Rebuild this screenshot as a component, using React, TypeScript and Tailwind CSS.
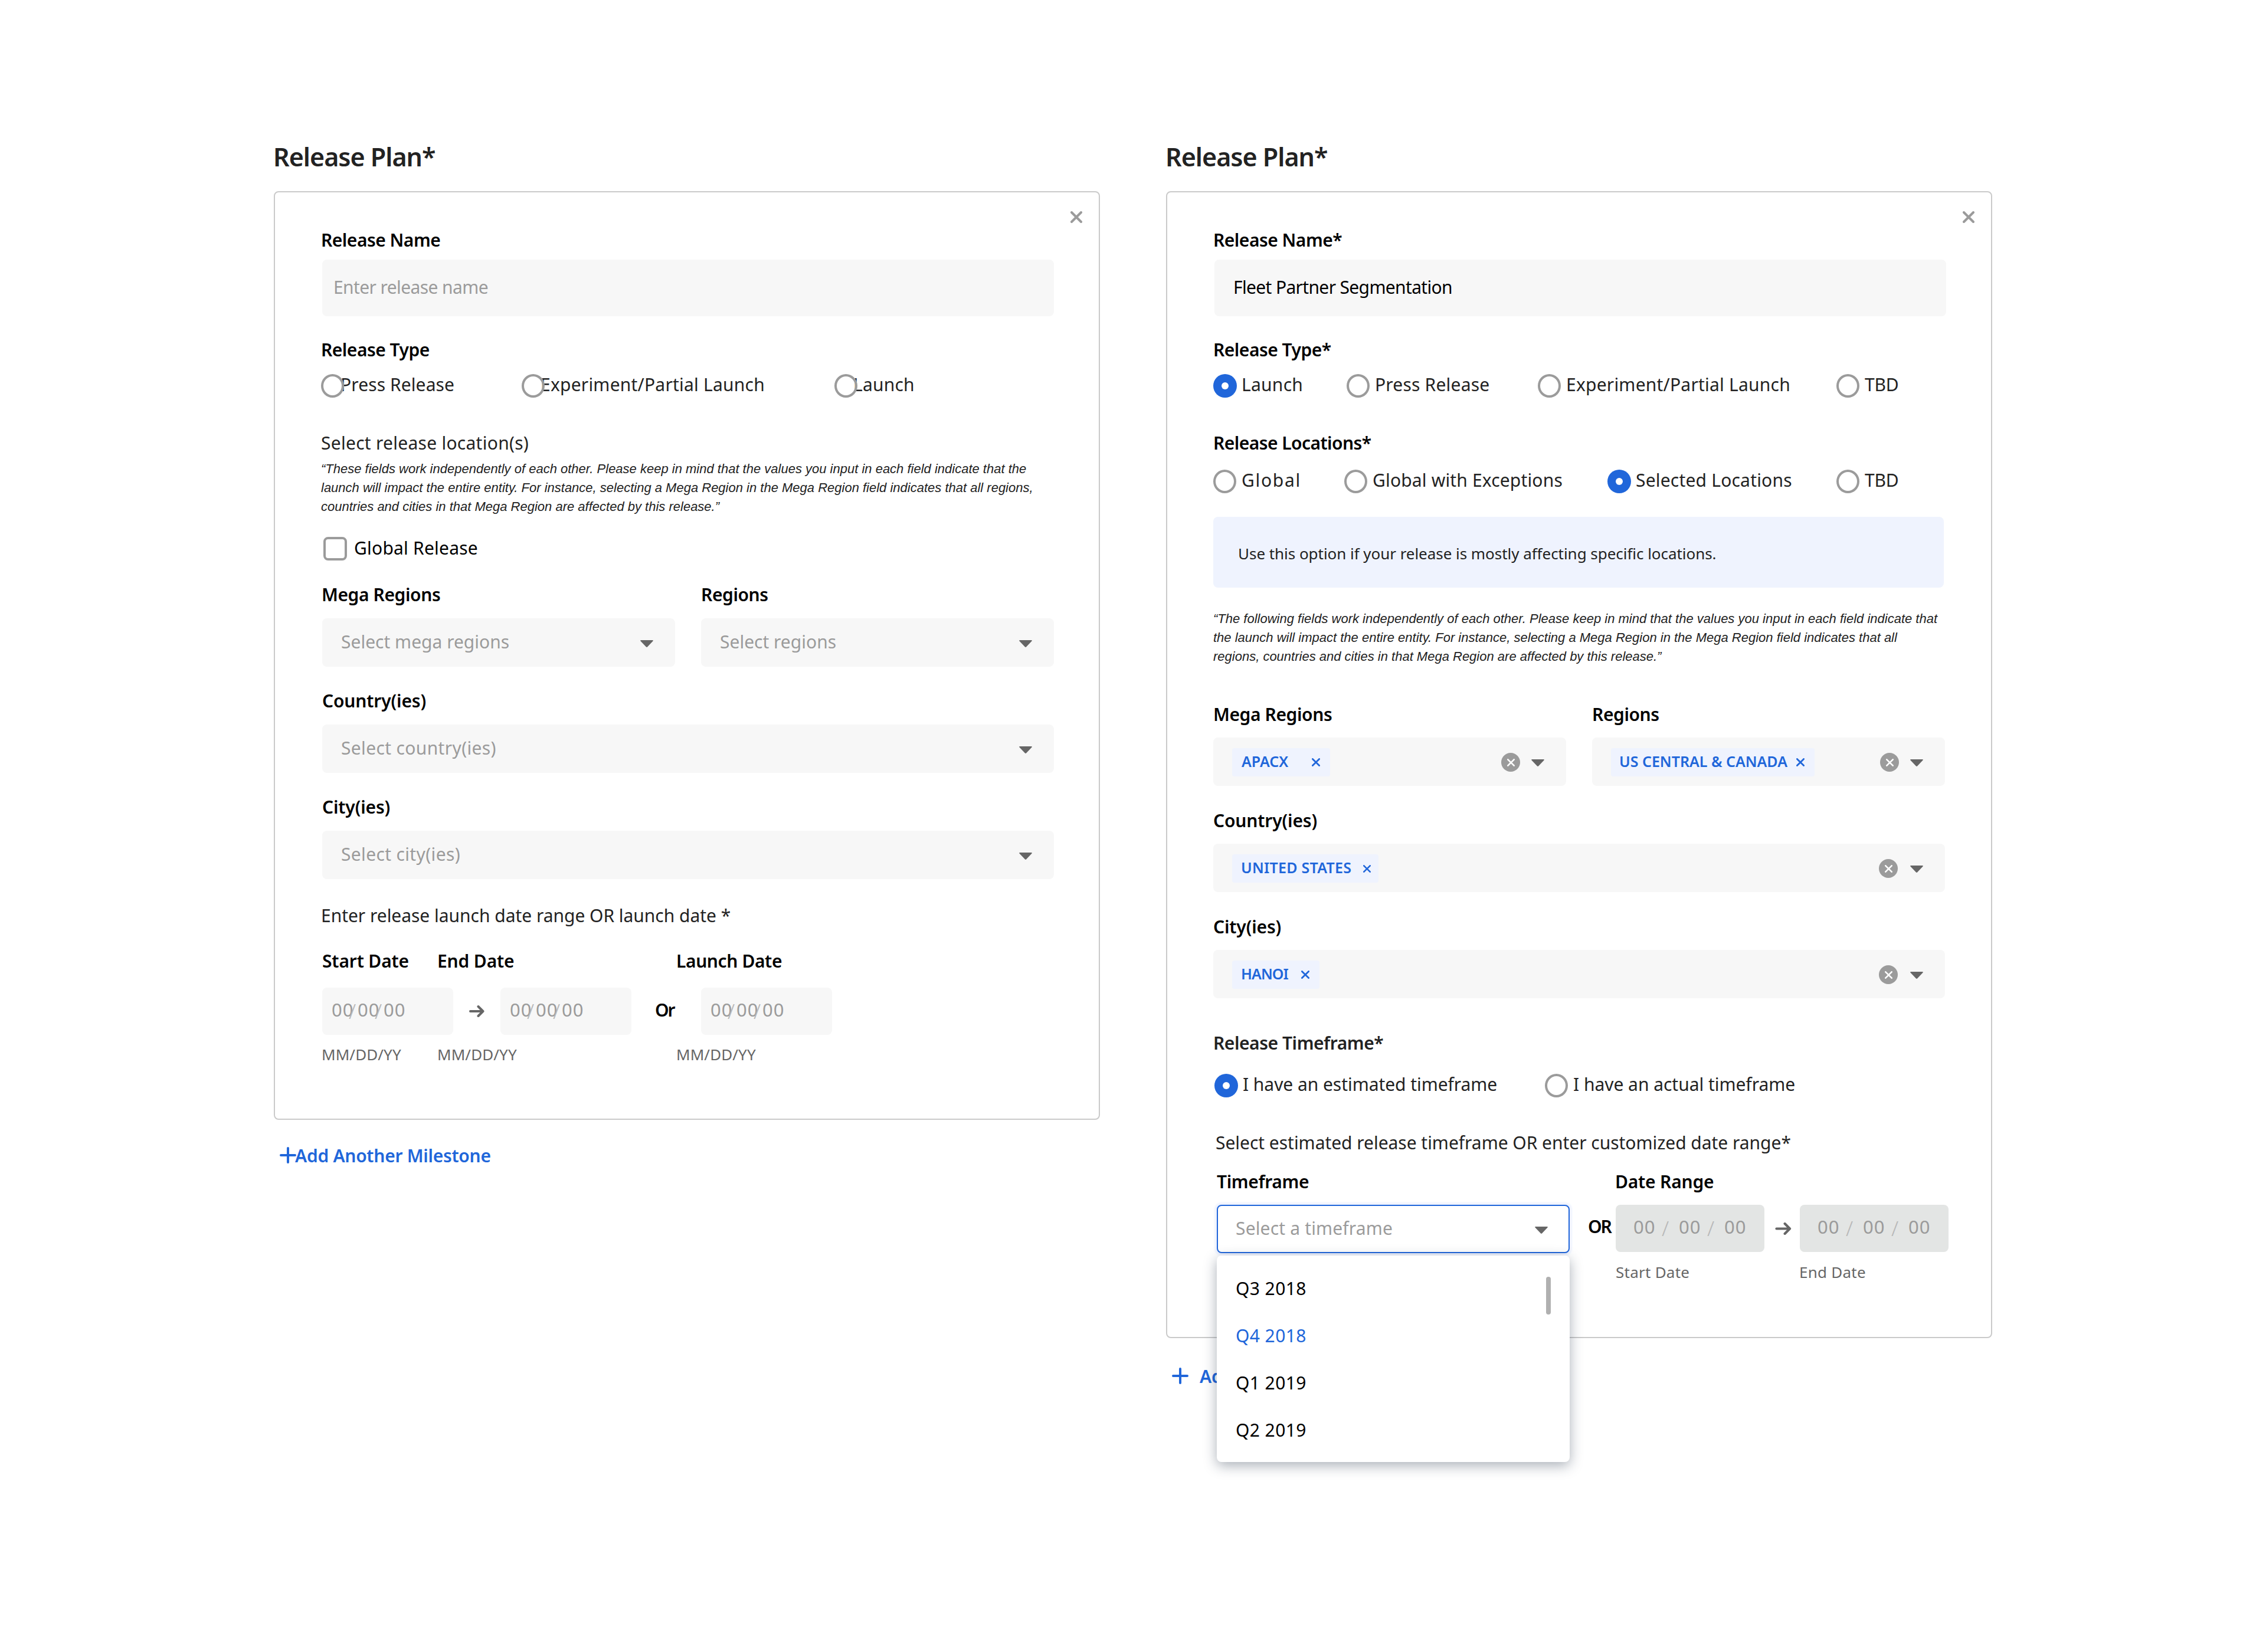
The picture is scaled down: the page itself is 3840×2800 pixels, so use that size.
import type { ReactNode } from 'react';

interface LabelProps {
  children: ReactNode;
  className?: string;
}

const Label = ({ children, className = 'tracking-[-0.5px]' }: LabelProps) => (
  <div className={`text-[30px] leading-[39px] pb-px font-semibold whitespace-nowrap ${className}`}>{children}</div>
);

const Cross = ({ className }: { className: string }) => (
  <svg viewBox="0 0 20 20" className={className} fill="none" stroke="currentColor" strokeWidth="4" strokeLinecap="round">
    <path d="M2 2L18 18M18 2L2 18" />
  </svg>
);

const Caret = () => (
  <svg viewBox="0 0 22 12" className="w-[22px] h-3 mt-1 shrink-0" fill="#666666">
    <path d="M1.2 0h19.6c.9 0 1.3 1 .7 1.6L12 11.5c-.5.6-1.4.6-2 0L.5 1.6C-.1 1 .3 0 1.2 0z" />
  </svg>
);

const Arrow = ({ className }: { className: string }) => (
  <svg viewBox="0 0 26 20" className={className} fill="none" stroke="#666666" strokeWidth="4" strokeLinecap="round" strokeLinejoin="round">
    <path d="M2 10H23M15.5 2L23.5 10L15.5 18" />
  </svg>
);

const Plus = () => (
  <svg viewBox="0 0 28 28" className="w-7 h-7 mt-[5px] shrink-0" fill="none" stroke="#2066da" strokeWidth="4" strokeLinecap="round">
    <path d="M14 2V26M2 14H26" />
  </svg>
);

interface RadioProps {
  label: string;
  checked?: boolean;
  className?: string;
  textClass?: string;
}

const Radio = ({ label, checked, className = '', textClass = 'ml-2' }: RadioProps) => (
  <div className={`flex h-10 shrink-0 text-[#222222] ${className}`}>
    <div className="relative z-10 w-10 shrink-0">
      {checked ? (
        <div className="size-10 rounded-full bg-[#2066da] flex items-center justify-center">
          <div className="size-3 rounded-full bg-white" />
        </div>
      ) : (
        <div className="w-[39px] h-10 rounded-[50%] border-4 border-[#9b9b9b]" />
      )}
    </div>
    <span className={`text-[30px] leading-9 whitespace-nowrap ${textClass}`}>{label}</span>
  </div>
);

interface SelectProps {
  placeholder?: string;
  className?: string;
  textClass?: string;
}

const Select = ({ placeholder, className = '', textClass = '' }: SelectProps) => (
  <div className={`h-[82px] rounded-lg bg-[#f7f7f7] flex items-center justify-between pl-8 pr-[37px] ${className}`}>
    <span className={`text-[30px] leading-[79px] self-start text-[#9b9b9b] whitespace-nowrap ${textClass}`}>{placeholder}</span>
    <Caret />
  </div>
);

interface TagSelectProps {
  tag: string;
  tagClass: string;
  textClass?: string;
  crossClass?: string;
  clearClass?: string;
  className?: string;
}

const TagSelect = ({
  tag,
  tagClass,
  textClass = '',
  crossClass = 'size-[14px]',
  clearClass = 'mr-[21px]',
  className = '',
}: TagSelectProps) => (
  <div className={`h-[82px] rounded-lg bg-[#f7f7f7] flex items-center pl-8 pr-[37px] ${className}`}>
    <div className={`h-12 mt-[2px] rounded bg-[#eff3fe] text-[#2066da] flex items-center justify-between ${tagClass}`}>
      <span className={`text-[25px] leading-[45px] self-start font-semibold whitespace-nowrap ${textClass}`}>{tag}</span>
      <Cross className={crossClass} />
    </div>
    <div className={`ml-auto mt-[2px] size-8 rounded-full bg-[#9b9b9b] text-white flex items-center justify-center ${clearClass}`}>
      <Cross className="size-[13px]" />
    </div>
    <Caret />
  </div>
);

const DateField = ({ wide }: { wide?: boolean }) => {
  const digits = wide ? 'w-[48px]' : 'w-[29px]';
  const slash = wide ? 'w-[29px]' : 'w-[15px]';
  return (
    <div className={`h-20 rounded-lg flex text-[31px] leading-[75px] tracking-[1px] text-[#9b9b9b] shrink-0 ${wide ? 'w-[252px] bg-[#e3e5e4] pl-[30px]' : 'w-[222px] bg-[#f7f7f7] pl-4'}`}>
      <span className={digits}>00</span>
      <span className={`text-[35px] leading-20 font-light tracking-normal text-[#b8b8b8] ${slash}`}>/</span>
      <span className={digits}>00</span>
      <span className={`text-[35px] leading-20 font-light tracking-normal text-[#b8b8b8] ${slash}`}>/</span>
      <span>00</span>
    </div>
  );
};

const Hint = ({ children, className = '' }: LabelProps) => (
  <div className={`text-[26px] leading-[31px] text-[#666666] whitespace-nowrap ${className}`}>{children}</div>
);

const Title = () => (
  <h1 className="text-[43px] leading-[56px] font-[580] text-[#222222] -ml-px tracking-[-1px]">Release Plan*</h1>
);

const EmptyPlan = () => (
  <section className="w-[1400px]">
    <Title />
    <div className="relative mt-[30px] h-[1574px] border-2 border-[#cacaca] rounded-lg pl-20 pr-[76px] pt-[61px]">
      <Cross className="absolute top-8 right-7 size-5 text-[#9b9b9b]" />

      <Label className="-ml-[2px] tracking-[-0.5px]">Release Name</Label>
      <div className="mt-[13px] h-24 rounded-lg bg-[#f7f7f7] pl-[19px] text-[30px] leading-[93px] tracking-[-0.6px] text-[#9b9b9b]">
        Enter release name
      </div>

      <Label className="mt-[37px] -ml-[2px] tracking-[-0.5px]">Release Type</Label>
      <div className="mt-[21px] flex -ml-[2px]">
        <Radio label="Press Release" className="w-[340px]" textClass="-ml-[7px] tracking-[0.1px]" />
        <Radio label="Experiment/Partial Launch" className="w-[530px]" textClass="-ml-[8px] tracking-[0.22px]" />
        <Radio label="Launch" textClass="-ml-[8px] tracking-[0.2px]" />
      </div>

      <div className="mt-[57px] -ml-[2px] text-[30px] leading-10 tracking-[0.27px] text-[#222222]">Select release location(s)</div>
      <p className="mt-2 -ml-[2px] font-['Liberation_Sans',sans-serif] italic text-[22px] leading-8 text-[#222222] whitespace-nowrap">
        “These fields work independently of each other. Please keep in mind that the values you input in each field indicate that the
        <br />
        launch will impact the entire entity. For instance, selecting a Mega Region in the Mega Region field indicates that all regions,
        <br />
        countries and cities in that Mega Region are affected by this release.”
      </p>

      <div className="mt-[35px] h-10 flex">
        <div className="ml-[2px] size-10 rounded-lg border-4 border-[#9b9b9b]" />
        <span className="ml-3 text-[30px] leading-[37px] tracking-[0.22px]">Global Release</span>
      </div>

      <div className="mt-[38px] flex gap-11">
        <div className="w-[598px]">
          <Label className="-ml-px tracking-[-0.4px]">Mega Regions</Label>
          <Select placeholder="Select mega regions" className="mt-5" />
        </div>
        <div className="w-[598px]">
          <Label className="tracking-[-0.4px]">Regions</Label>
          <Select placeholder="Select regions" className="mt-5" />
        </div>
      </div>

      <Label className="mt-[38px] tracking-[-0.15px]">Country(ies)</Label>
      <Select placeholder="Select country(ies)" className="mt-5" textClass="tracking-[0.35px]" />

      <Label className="mt-[38px] tracking-[-0.15px]">City(ies)</Label>
      <Select placeholder="Select city(ies)" className="mt-5" textClass="tracking-[0.35px]" />

      <div className="mt-[42px] -ml-[2px] text-[30px] leading-10 tracking-[-0.03px] text-[#222222] whitespace-nowrap">
        Enter release launch date range OR launch date *
      </div>

      <div className="mt-[37px] flex">
        <Label className="w-[195px] tracking-[-0.15px]">Start Date</Label>
        <Label className="w-[405px] tracking-[-0.15px]">End Date</Label>
        <Label className="tracking-[-0.4px]">Launch Date</Label>
      </div>
      <div className="mt-[25px] flex">
        <DateField />
        <Arrow className="w-[26px] h-5 ml-[27px] mr-[27px] mt-[30px]" />
        <DateField />
        <span className="w-[118px] pl-[40px] text-[30px] leading-[76px] font-semibold tracking-[-2px]">Or</span>
        <DateField />
      </div>
      <div className="mt-[18px] flex pb-px">
        <Hint className="w-[195px] -ml-px mr-px tracking-[0.1px]">MM/DD/YY</Hint>
        <Hint className="w-[405px] tracking-[0.1px]">MM/DD/YY</Hint>
        <Hint className="tracking-[0.1px]">MM/DD/YY</Hint>
      </div>
    </div>
    <div className="mt-[41px] ml-[10px] flex text-[#2066da]">
      <Plus />
      <Label className="-ml-[2px] tracking-[-0.28px]">Add Another Milestone</Label>
    </div>
  </section>
);

const quarters = ['Q3 2018', 'Q4 2018', 'Q1 2019', 'Q2 2019'];

const FilledPlan = () => (
  <section className="w-[1400px]">
    <Title />
    <div className="relative mt-[30px] h-[1944px] border-2 border-[#cacaca] rounded-lg pl-[78px] pr-[78px] pt-[61px]">
      <Cross className="absolute top-8 right-7 size-5 text-[#9b9b9b]" />

      <Label>Release Name*</Label>
      <div className="mt-[13px] ml-[2px] h-24 w-[1240px] rounded-lg bg-[#f7f7f7] pl-8 text-[30px] leading-[93px] tracking-[-0.65px]">
        Fleet Partner Segmentation
      </div>

      <Label className="mt-[37px] tracking-[-0.5px]">Release Type*</Label>
      <div className="mt-[21px] flex">
        <Radio label="Launch" checked className="w-[226px]" textClass="ml-2 tracking-[0.25px]" />
        <Radio label="Press Release" className="w-[324px]" textClass="ml-2 tracking-[0.2px]" />
        <Radio label="Experiment/Partial Launch" className="w-[506px]" textClass="ml-2 tracking-[0.22px]" />
        <Radio label="TBD" textClass="ml-2 tracking-[-0.2px]" />
      </div>

      <Label className="mt-[57px] tracking-[-0.55px]">Release Locations*</Label>
      <div className="mt-[25px] flex">
        <Radio label="Global" className="w-[222px]" textClass="ml-2 tracking-[1.7px]" />
        <Radio label="Global with Exceptions" className="w-[446px]" textClass="ml-2 tracking-[0.16px]" />
        <Radio label="Selected Locations" checked className="w-[388px]" textClass="ml-2 tracking-[0.2px]" />
        <Radio label="TBD" textClass="ml-2 tracking-[-0.2px]" />
      </div>

      <div className="mt-10 h-[120px] w-[1238px] rounded-lg bg-[#eff3fe] pl-[42px] text-[26px] leading-[124px] tracking-[-0.04px] text-[#222222]">
        Use this option if your release is mostly affecting specific locations.
      </div>

      <p className="mt-[37px] font-['Liberation_Sans',sans-serif] italic text-[22px] leading-8 text-[#222222] whitespace-nowrap">
        “The following fields work independently of each other. Please keep in mind that the values you input in each field indicate that
        <br />
        the launch will impact the entire entity. For instance, selecting a Mega Region in the Mega Region field indicates that all
        <br />
        regions, countries and cities in that Mega Region are affected by this release.”
      </p>

      <div className="mt-[62px] flex gap-11">
        <div className="w-[598px]">
          <Label className="tracking-[-0.4px]">Mega Regions</Label>
          <TagSelect tag="APACX" className="mt-[19px]" tagClass="w-[166px] pl-4 pr-[17px]" clearClass="mr-[19px]" />
        </div>
        <div className="w-[598px]">
          <Label className="tracking-[-0.4px]">Regions</Label>
          <TagSelect tag="US CENTRAL &amp; CANADA" className="mt-[19px]" tagClass="w-[345px] pl-[14px] pr-[17px]" clearClass="mr-[19px]" />
        </div>
      </div>

      <Label className="mt-[39px] tracking-[-0.15px]">Country(ies)</Label>
      <TagSelect
        tag="UNITED STATES"
        className="mt-[19px] w-[1240px]"
        tagClass="w-[248px] pl-[15px] pr-[13px]"
        textClass="tracking-[0.25px]"
        crossClass="size-[13px]"
      />

      <Label className="mt-[39px] tracking-[-0.15px]">City(ies)</Label>
      <TagSelect tag="HANOI" className="mt-[19px] w-[1240px]" tagClass="w-[148px] pl-[15px] pr-[17px]" textClass="tracking-[-0.9px]" />

      <Label className="mt-[56px] tracking-[-0.45px] text-[#222222]">Release Timeframe*</Label>
      <div className="mt-8 ml-[2px] flex">
        <Radio label="I have an estimated timeframe" checked className="w-[560px]" textClass="ml-2 tracking-[-0.05px]" />
        <Radio label="I have an actual timeframe" textClass="ml-2 tracking-[-0.03px]" />
      </div>

      <div className="mt-[57px] ml-1 text-[30px] leading-10 tracking-[-0.03px] text-[#222222] whitespace-nowrap">
        Select estimated release timeframe OR enter customized date range*
      </div>

      <div className="mt-[26px] ml-[6px] flex">
        <Label className="w-[675px] tracking-[-0.35px]">Timeframe</Label>
        <Label className="tracking-[-0.2px]">Date Range</Label>
      </div>
      <div className="mt-[19px] ml-[6px] flex items-start">
        <div className="relative shrink-0">
          <div className="w-[598px] h-[82px] rounded-lg border-2 border-[#2066da] bg-white shadow-[0_0_3px_4px_#eff3fe] flex items-center justify-between pl-[30px] pr-[35px]">
            <span className="text-[30px] leading-[76px] self-start tracking-[0.16px] text-[#9b9b9b]">Select a timeframe</span>
            <Caret />
          </div>
          <div className="absolute z-20 top-[86px] left-0 w-[598px] h-[350px] rounded-lg bg-white shadow-[0_6px_22px_rgba(30,45,65,0.38)] pt-[28px] pl-8">
            {quarters.map((q) => (
              <div
                key={q}
                className={`h-20 text-[30px] leading-[55px] tracking-[0.4px] ${q === 'Q4 2018' ? 'text-[#2066da]' : 'text-black'}`}
              >
                {q}
              </div>
            ))}
            <div className="absolute top-9 right-8 w-2 h-16 rounded-full bg-[#b0b0b0]" />
          </div>
        </div>
        <span className="w-[78px] shrink-0 pl-[31px] text-[30px] leading-[73px] font-semibold tracking-[-2px]">OR</span>
        <div>
          <div className="flex">
            <DateField wide />
            <Arrow className="w-7 h-[21px] ml-[18px] mr-[14px] mt-[30px] shrink-0" />
            <DateField wide />
          </div>
          <div className="mt-[19px] flex">
            <Hint className="w-[311px] tracking-[0.25px]">Start Date</Hint>
            <Hint className="tracking-[0.25px]">End Date</Hint>
          </div>
        </div>
      </div>
    </div>
    <div className="mt-[45px] ml-[10px] flex text-[#2066da]">
      <Plus />
      <Label className="ml-[19px] tracking-[-0.28px]">Add Another Milestone</Label>
    </div>
  </section>
);

export default function App() {
  return (
    <main className="w-[3840px] h-[2800px] bg-white text-black font-['Noto_Sans',sans-serif] flex gap-28 pl-[464px] pt-[238px] overflow-hidden">
      <EmptyPlan />
      <FilledPlan />
    </main>
  );
}
